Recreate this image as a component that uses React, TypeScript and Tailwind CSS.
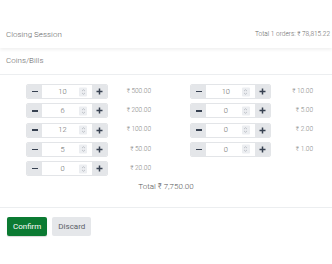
import React from 'react';

type Coin = { value: string; count: number };

const leftCoins: Coin[] = [
  { value: '500.00', count: 10 },
  { value: '200.00', count: 6 },
  { value: '100.00', count: 12 },
  { value: '50.00', count: 5 },
  { value: '20.00', count: 0 },
];

const rightCoins: Coin[] = [
  { value: '10.00', count: 10 },
  { value: '5.00', count: 0 },
  { value: '2.00', count: 0 },
  { value: '1.00', count: 0 },
];

function Spinner() {
  return (
    <span className="absolute right-[5px] top-1/2 -translate-y-1/2 w-[8px] h-[9px] bg-[#eceef1] rounded-[1px] flex items-center justify-center">
      <svg width="5" height="7" viewBox="0 0 5 7" fill="none" stroke="#b4b8be" strokeWidth="0.8">
        <path d="M1 2.6 L2.5 1.2 L4 2.6" />
        <path d="M1 4.4 L2.5 5.8 L4 4.4" />
      </svg>
    </span>
  );
}

function CoinRow({ coin }: { coin: Coin }) {
  return (
    <div className="flex items-center h-[15px]">
      <div className="flex h-full w-[82px] rounded-[2px] overflow-hidden border border-[#e3e5e8]">
        <button className="w-[15px] h-full bg-[#e4e6e9] flex items-center justify-center">
          <span className="block w-[6px] h-[1.5px] bg-[#374151]" />
        </button>
        <div className="relative flex-1 bg-white flex items-center justify-center pr-[9px] text-[7.5px] text-[#6a6a6a]">
          {coin.count}
          <Spinner />
        </div>
        <button className="w-[15px] h-full bg-[#e4e6e9] flex items-center justify-center">
          <svg width="7" height="7" viewBox="0 0 7 7">
            <path d="M3.5 0.5 V6.5 M0.5 3.5 H6.5" stroke="#374151" strokeWidth="1.5" />
          </svg>
        </button>
      </div>
      <div className="w-[43px] text-right text-[6.5px] text-[#858585]">₹ {coin.value}</div>
    </div>
  );
}

export default function App() {
  return (
    <div className="w-[332px] h-[264px] bg-white text-[#4b5563] font-[350]" style={{ fontFamily: 'Roboto, "Liberation Sans", sans-serif' }}>
      <div className="h-[21px]" />
      {/* Header */}
      <div className="h-[27px] flex items-center justify-between pl-[6px] pr-[2px] shadow-[0_2px_3px_rgba(0,0,0,0.06)] relative">
        <span className="text-[8px] text-[#666]">Closing Session</span>
        <span className="text-[6.5px] text-[#666]">Total 1 orders: ₹ 78,815.22</span>
      </div>
      <div className="h-[27px] flex items-center pl-[6px] border-b border-[#eceef0]">
        <span className="text-[8px] text-[#666]">Coins/Bills</span>
      </div>

      {/* Coins grid */}
      <div className="flex pt-[9px]">
        <div className="w-[166px] pl-[26px] flex flex-col gap-[4.3px]">
          {leftCoins.map((c) => (
            <CoinRow key={c.value} coin={c} />
          ))}
        </div>
        <div className="w-[166px] pl-[24px] flex flex-col gap-[4.3px]">
          {rightCoins.map((c) => (
            <div key={c.value} className="pr-[19px]">
              <CoinRow coin={c} />
            </div>
          ))}
        </div>
      </div>
      <div className="text-center text-[8px] text-[#555] mt-[5px] h-[12px] leading-[12px]">Total ₹ 7,750.00</div>

      <div className="mt-[14px] border-t border-[#eceef0] pt-[9px] pl-[7px] flex gap-[5px]">
        <button className="h-[19px] px-[6px] bg-[#0b7a32] text-white text-[8px] font-normal rounded-[2px] shadow-[0_1px_1px_rgba(0,0,0,0.15)]">Confirm</button>
        <button className="h-[19px] px-[6px] bg-[#e5e7ea] text-[#5b6068] text-[8px] font-normal rounded-[2px]">Discard</button>
      </div>
    </div>
  );
}
